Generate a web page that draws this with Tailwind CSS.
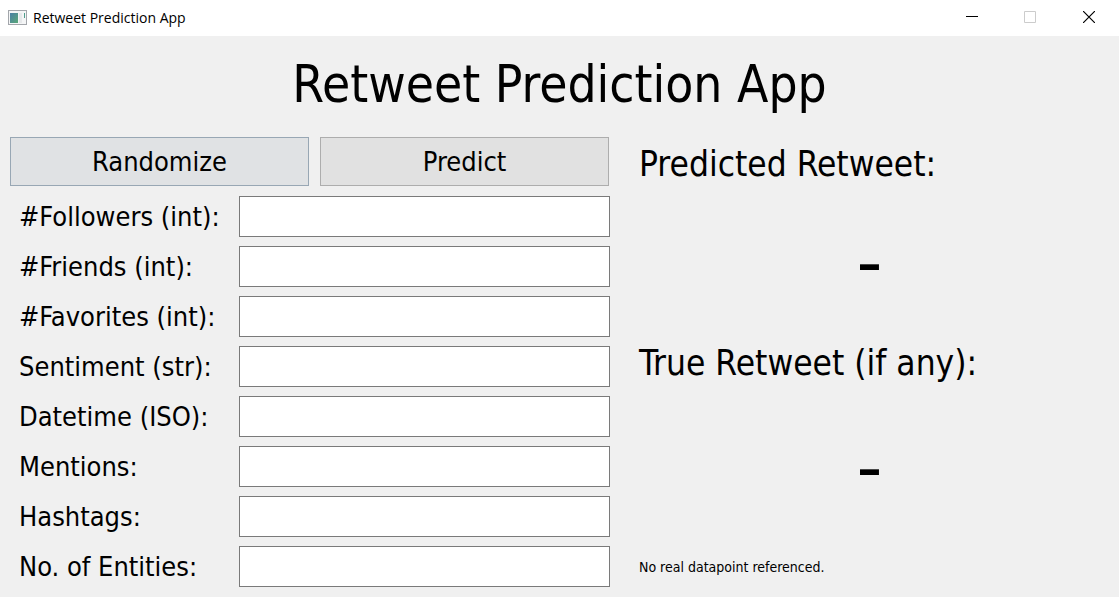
<!DOCTYPE html>
<html lang="en">
<head>
<meta charset="utf-8">
<meta name="viewport" content="width=device-width, initial-scale=1">
<title>Retweet Prediction App</title>
<script src="https://cdn.jsdelivr.net/npm/@tailwindcss/browser@4"></script>
</head>
<body class="flex min-h-screen flex-col bg-[#f0f0f0] font-['DejaVu_Sans_Condensed','DejaVu_Sans',sans-serif] text-black">
<header class="flex h-9 shrink-0 items-center bg-white pl-2">
  <svg class="h-4 w-5" viewBox="0 0 20 16" aria-hidden="true">
    <defs><linearGradient id="pane" x1="0" y1="0" x2="1" y2="1"><stop offset="0" stop-color="#4a7fa5"/><stop offset="1" stop-color="#5aa878"/></linearGradient></defs>
    <rect x="0.5" y="0.5" width="18" height="14" fill="#f4f5f6" stroke="#a3a6ab"/>
    <rect x="2" y="3" width="8" height="10" fill="url(#pane)"/>
    <rect x="11" y="3" width="3" height="10" fill="#e6e8ea"/>
    <rect x="16" y="3" width="1" height="5" fill="#4f9d8c"/>
  </svg>
  <span class="ml-[5px] font-['Open_Sans',sans-serif] text-[14px] leading-5">Retweet Prediction App</span>
  <div class="ml-auto flex h-full">
    <button class="flex w-[58px] items-center justify-center" aria-label="Minimize"><svg class="size-3" viewBox="0 0 12 12"><path d="M0 4.5h12" stroke="#000"/></svg></button>
    <button class="flex w-[58px] items-center justify-center pb-[2px]" aria-label="Maximize" disabled><svg class="size-3" viewBox="0 0 12 12"><path d="M.5.5h11v11H.5z" fill="none" stroke="#ccc"/></svg></button>
    <button class="flex w-[60px] items-center justify-center pb-[2px]" aria-label="Close"><svg class="size-3" viewBox="0 0 12 12"><path d="M0 0l12 12M12 0L0 12" stroke="#000" stroke-width="1.2"/></svg></button>
  </div>
</header>
<main class="flex-1 px-[10px] pb-[10px]">
  <h1 class="pt-[14px] pb-[18px] text-center text-[51px] leading-[69px]">Retweet Prediction App</h1>
  <div class="grid grid-cols-[600fr_479fr] gap-x-5">
    <form class="flex flex-col gap-[10px] text-[27px] leading-8">
      <div class="grid grid-cols-[299fr_289fr] gap-[11px] pr-px">
        <button type="button" class="h-[49px] border border-[#98a7b4] bg-[#e0e2e4]">Randomize</button>
        <button type="button" class="h-[49px] border border-[#adadad] bg-[#e1e1e1]">Predict</button>
      </div>
      <div class="grid grid-cols-[229fr_371fr] items-center gap-y-[9px]">
        <label for="followers" class="pl-[9px]">#Followers (int):</label><input id="followers" class="h-[41px] w-full border border-[#7a7a7a] bg-white px-1">
        <label for="friends" class="pl-[9px]">#Friends (int):</label><input id="friends" class="h-[41px] w-full border border-[#7a7a7a] bg-white px-1">
        <label for="favorites" class="pl-[9px]">#Favorites (int):</label><input id="favorites" class="h-[41px] w-full border border-[#7a7a7a] bg-white px-1">
        <label for="sentiment" class="pl-[9px]">Sentiment (str):</label><input id="sentiment" class="h-[41px] w-full border border-[#7a7a7a] bg-white px-1">
        <label for="datetime" class="pl-[9px]">Datetime (ISO):</label><input id="datetime" class="h-[41px] w-full border border-[#7a7a7a] bg-white px-1">
        <label for="mentions" class="pl-[9px]">Mentions:</label><input id="mentions" class="h-[41px] w-full border border-[#7a7a7a] bg-white px-1">
        <label for="hashtags" class="pl-[9px]">Hashtags:</label><input id="hashtags" class="h-[41px] w-full border border-[#7a7a7a] bg-white px-1">
        <label for="entities" class="pl-[9px]">No. of Entities:</label><input id="entities" class="h-[41px] w-full border border-[#7a7a7a] bg-white px-1">
      </div>
    </form>
    <section class="grid grid-rows-[53px_124px_57px_131px_45px] items-center gap-y-[10px]">
      <h2 class="pl-[9px] text-[35px] leading-10">Predicted Retweet:</h2>
      <p class="text-center font-['DejaVu_Sans',sans-serif] text-[72px] leading-[72px]">-</p>
      <h2 class="pl-[9px] text-[35px] leading-10">True Retweet (if any):</h2>
      <p class="text-center font-['DejaVu_Sans',sans-serif] text-[72px] leading-[72px]">-</p>
      <p class="self-end pl-[9px] text-[14px] leading-10">No real datapoint referenced.</p>
    </section>
  </div>
</main>
</body>
</html>
